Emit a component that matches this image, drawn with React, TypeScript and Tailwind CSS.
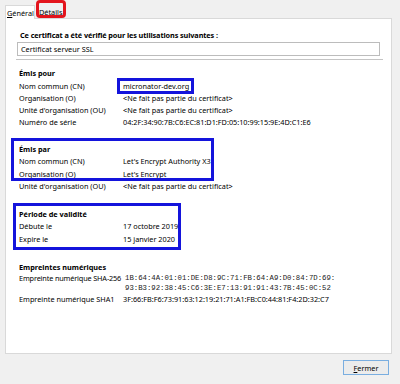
const font = { fontFamily: '"Noto Sans", "Open Sans", sans-serif' }

function Row({ label, value }: { label: string; value: React.ReactNode }) {
  return (
    <div className="flex whitespace-nowrap leading-[12.3px]">
      <div className="w-[105px] shrink-0 pl-[1px]">{label}</div>
      <div>{value}</div>
    </div>
  )
}

function Heading({ children }: { children: React.ReactNode }) {
  return <div className="pl-[1px] font-bold leading-[12.5px]">{children}</div>
}

function BlueBox({ className }: { className: string }) {
  return <div className={"pointer-events-none absolute border-[3px] border-[#1414dc] " + className} />
}

export default function App() {
  return (
    <div
      className="flex h-[384px] w-[400px] flex-col bg-[#f0f0f0] pl-[5px] pr-[8px] text-[7.3px] text-black"
      style={font}
    >
      {/* tabs */}
      <div className="flex h-[18px] items-end">
        <div className="relative z-10 -mb-px h-[14px] w-[30px] border border-b-0 border-[#d9d9d9] bg-white pl-[1px] pt-[1px] leading-[12px]">
          <span className="underline">G</span>énéral
        </div>
        <div className="relative ml-[1px] h-[18px] w-[30px]">
          <div className="pl-[3px] pt-[6px] leading-[12px]">Détails</div>
          <div className="absolute inset-0 rounded-[4px] border-[3px] border-[#e3141c]" />
        </div>
      </div>

      {/* panel */}
      <div className="flex h-[336px] flex-col border border-[#d9d9d9] bg-white px-[12px] pt-[10px]">
        <div className="ml-[2px] font-bold leading-[12.5px] tracking-[-0.1px]">
          Ce certificat a été vérifié pour les utilisations suivantes :
        </div>
        <div className="-ml-[1px] mt-[0.5px] h-[14px] w-[363px] border border-[#bcbcbc] pl-[3px] leading-[12px]">
          Certificat serveur SSL
        </div>
        <div className="-ml-[2px] mt-[3px] h-px w-[367px] bg-[#c4c4c4]" />

        <div className="mt-[7px]">
          <Heading>Émis pour</Heading>
          <Row
            label="Nom commun (CN)"
            value={
              <span className="relative inline-block">
                micronator-dev.org
                <BlueBox className="-bottom-[2px] -left-[6px] -right-[5px] -top-[2px]" />
              </span>
            }
          />
          <Row label="Organisation (O)" value="<Ne fait pas partie du certificat>" />
          <Row label="Unité d'organisation (OU)" value="<Ne fait pas partie du certificat>" />
          <Row label="Numéro de série" value="04:2F:34:90:7B:C6:EC:81:D1:FD:05:10:99:15:9E:4D:C1:E6" />
        </div>

        <div className="mt-[14px] [&_.flex]:leading-[12.5px]">
          <div className="relative">
            <Heading>Émis par</Heading>
            <Row label="Nom commun (CN)" value="Let's Encrypt Authority X3" />
            <Row label="Organisation (O)" value="Let's Encrypt" />
            <BlueBox className="-bottom-[1px] -left-[7px] -top-[4.5px] w-[203px]" />
          </div>
          <Row label="Unité d'organisation (OU)" value="<Ne fait pas partie du certificat>" />
        </div>

        <div className="relative mt-[15px] [&_.flex]:leading-[12.5px]">
          <Heading>Période de validité</Heading>
          <Row label="Débute le" value="17 octobre 2019" />
          <Row label="Expire le" value="15 janvier 2020" />
          <BlueBox className="-bottom-[5px] -left-[5px] -top-[4.5px] w-[168px]" />
        </div>

        <div className="mt-[16px]">
          <Heading>Empreintes numériques</Heading>
          <div className="-mt-[1px] flex whitespace-nowrap leading-[10px]">
            <div className="w-[107px] shrink-0 pl-[1px] tracking-[-0.15px]">Empreinte numérique SHA-256</div>
            <div className="text-[7.3px] text-[#222]" style={{ fontFamily: '"Liberation Mono", monospace' }}>
              <div>1B:64:4A:01:01:DE:D8:9C:71:FB:64:A9:D0:84:7D:69:</div>
              <div>93:B3:92:38:45:C6:3E:E7:13:91:91:43:7B:45:0C:52</div>
            </div>
          </div>
          <div className="mt-[0.5px] flex whitespace-nowrap leading-[12.5px]">
            <div className="w-[105px] shrink-0 pl-[1px]">Empreinte numérique SHA1</div>
            <div>3F:66:FB:F6:73:91:63:12:19:21:71:A1:FB:C0:44:81:F4:2D:32:C7</div>
          </div>
        </div>
      </div>

      {/* footer */}
      <div className="mt-[6px] flex justify-end pr-[3px]">
        <button className="h-[15px] w-[46px] border border-[#7aaee0] bg-[#ececec] text-[7.3px] leading-[12px]" style={font}>
          <span className="underline">F</span>ermer
        </button>
      </div>
    </div>
  )
}
